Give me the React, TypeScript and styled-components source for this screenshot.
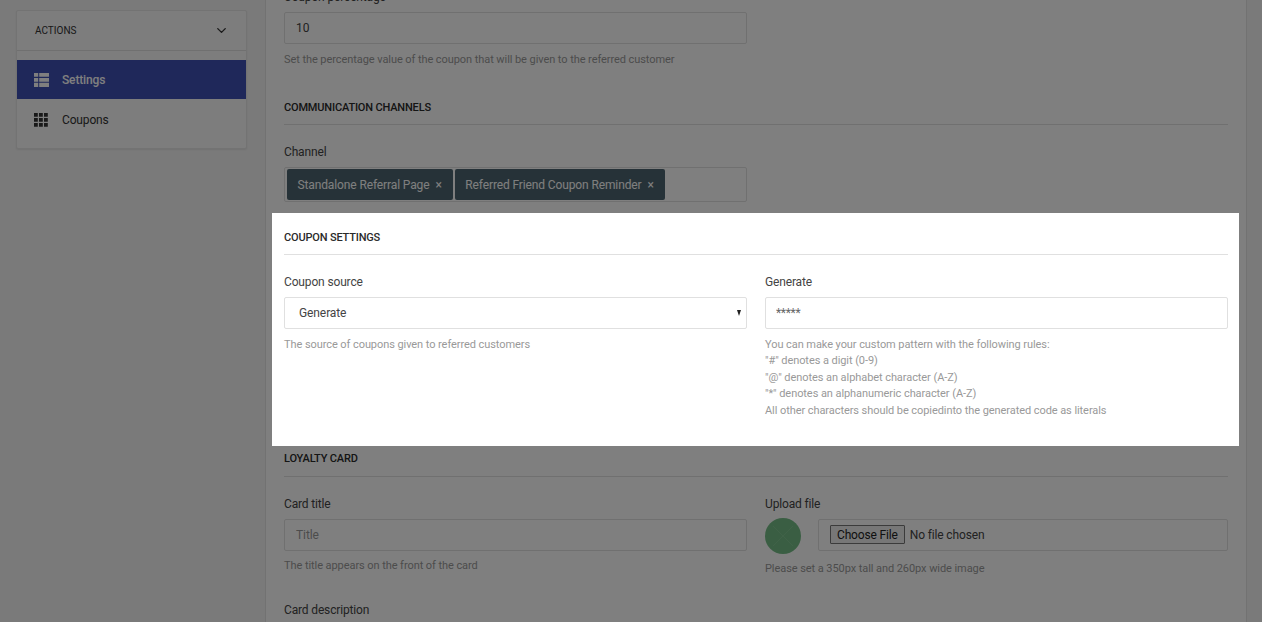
import React from "react";
import styled, { createGlobalStyle } from "styled-components";
import { ChevronDown } from "lucide-react";

const Global = createGlobalStyle`
  html, body { margin: 0; padding: 0; height: 622px; overflow: hidden; background: #f5f5f5; }
  body { font-family: Roboto, "Liberation Sans", sans-serif; color: #333; }
  * { box-sizing: border-box; }
`;

const Page = styled.div`
  display: flex;
  height: 622px;
  overflow: hidden;
  background: #f5f5f5;
`;
const Sidebar = styled.aside`
  flex: 0 0 266px;
  padding: 10px 18px 0 16px;
  border-right: 1px solid #e4e4e4;
`;
const SideCard = styled.nav`
  background: #fafafa;
  border: 1px solid #e6e6e6;
  border-radius: 2px;
  height: 139px;
  box-shadow: 0 1px 2px rgba(0,0,0,.08);
`;
const SideHead = styled.div`
  height: 40px;
  padding: 0 17px 1px 18px;
  display: flex;
  align-items: center;
  justify-content: space-between;
  font-size: 10px;
  color: #333;
  border-bottom: 1px solid #e0e0e0;
  margin-bottom: 9px;
`;
const SideItem = styled.div<{ $active?: boolean }>`
  height: ${p => (p.$active ? 39 : 41)}px;
  padding-left: 17px;
  display: flex;
  align-items: center;
  gap: 13px;
  font-size: 12px;
  letter-spacing: -.15px;
  font-weight: ${p => (p.$active ? 500 : 400)};
  color: ${p => (p.$active ? "#fff" : "#333")};
  background: ${p => (p.$active ? "#3f51b5" : "transparent")};
  svg { fill: currentColor; flex: none; }
`;
const Main = styled.main`
  flex: 0 0 981px;
  background: #fff;
  border-right: 1px solid #e4e4e4;
  margin-top: -10px;
  padding: 0 0 0 6px;
  height: 700px;
`;
const Section = styled.section`
  padding: 0 11px 0 12px;
  width: 967px;
`;
const Spotlight = styled.section`
  position: relative;
  z-index: 3;
  width: 967px;
  height: 233px;
  background: #fff;
  padding: 19px 11px 0 12px;
`;
const Title = styled.h3<{ $tall?: boolean }>`
  margin: 0;
  height: ${p => (p.$tall ? 24 : 23)}px;
  line-height: 12px;
  font-size: 11px;
  font-weight: 500;
  color: #2a2a2a;
  text-transform: uppercase;
  border-bottom: 1px solid #e0e0e0;
  letter-spacing: -.17px;
`;
const Row = styled.div`
  display: grid;
  grid-template-columns: 463px 463px;
  column-gap: 18px;
`;
const Field = styled.div<{ $narrow?: boolean }>`
  display: flex;
  flex-direction: column;
  min-width: 0;
  width: ${p => (p.$narrow ? "463px" : "auto")};
`;
const Label = styled.label`
  display: block;
  font-size: 12px;
  line-height: 14px;
  color: #444;
  letter-spacing: -.15px;
  margin-bottom: 8px;
`;
const TextInput = styled.input<{ $pattern?: boolean }>`
  width: 100%;
  height: 32px;
  border: 1px solid #e0e0e0;
  border-radius: 2px;
  padding: 0 ${p => (p.$pattern ? 10 : 11)}px;
  font: 12px Roboto, sans-serif;
  letter-spacing: ${p => (p.$pattern ? "-.3px" : "-.1px")};
  color: ${p => (p.$pattern ? "#666" : "#444")};
  outline: none;
  background: #fff;
  &::placeholder { color: #999; }
`;
const SelectWrap = styled.div`
  position: relative;
  &::after {
    content: "";
    position: absolute;
    right: 6px;
    top: 13px;
    border-left: 2.5px solid transparent;
    border-right: 2.5px solid transparent;
    border-top: 6px solid #222;
    pointer-events: none;
  }
`;
const Select = styled.select`
  display: block;
  width: 100%;
  height: 32px;
  border: 1px solid #e0e0e0;
  border-radius: 2px;
  padding: 0 14px;
  font: 12px Roboto, sans-serif;
  letter-spacing: -.1px;
  color: #444;
  background: #fff;
  outline: none;
  appearance: none;
`;
const Hint = styled.p<{ $tight?: boolean }>`
  margin: ${p => (p.$tight ? 7 : 8)}px 0 0;
  font-size: 11px;
  line-height: 16.5px;
  letter-spacing: -.07px;
  color: #999;
`;
const ChipBox = styled.div`
  height: 35px;
  border: 1px solid #e0e0e0;
  border-radius: 2px;
  padding: 1px 1px 1px 2px;
  display: flex;
  gap: 2px;
  width: 463px;
`;
const Chip = styled.span`
  height: 31px;
  padding: 1px 11px 0 10.5px;
  display: inline-flex;
  align-items: center;
  gap: 6px;
  background: #4d6570;
  color: #fff;
  font-size: 12px;
  letter-spacing: -.12px;
  border-radius: 2px;
  i { font-style: normal; font-size: 12px; }
`;
const UploadRow = styled.div`
  display: flex;
  align-items: flex-start;
  gap: 17px;
`;
const Avatar = styled.div`
  width: 36px;
  height: 36px;
  margin-top: -1px;
  border-radius: 50%;
  background: #74bd86;
  flex: none;
  svg { display: block; }
`;
const FileBox = styled.div`
  flex: 1;
  height: 32px;
  border: 1px solid #e0e0e0;
  border-radius: 2px;
  padding: 0 11px;
  display: flex;
  align-items: center;
  input {
    font: 12px Roboto, sans-serif;
    letter-spacing: -.15px;
    color: #444;
    width: 100%;
  }
  input::file-selector-button {
    font: 12px Roboto, sans-serif;
    letter-spacing: -.15px;
    height: 19px;
    padding: 0 6px;
    margin-right: 5px;
    color: #222;
    background: #efefef;
    border: 1px solid #767676;
    border-radius: 1px;
  }
`;
const Gap = styled.div<{ $h: number }>`
  height: ${p => p.$h}px;
`;
const Overlay = styled.div`
  position: fixed;
  inset: 0;
  background: rgba(0,0,0,.5);
  z-index: 2;
`;

const ListIcon = () => (
  <svg width="15" height="14" viewBox="0 0 15 14">
    <path d="M0 0h4.2v3.8H0zM5.2 0H15v3.8H5.2zM0 4.9h4.2v3.8H0zM5.2 4.9H15v3.8H5.2zM0 9.8h4.2V14H0zM5.2 9.8H15V14H5.2z" />
  </svg>
);
const GridIcon = () => (
  <svg width="15" height="14" viewBox="0 0 15 14">
    <path d="M0 0h3.8v3.8H0zM5 0h3.8v3.8H5zM10 0h3.8v3.8H10zM0 5h3.8v3.8H0zM5 5h3.8v3.8H5zM10 5h3.8v3.8H10zM0 10h3.8v3.8H0zM5 10h3.8v3.8H5zM10 10h3.8v3.8H10z" />
  </svg>
);

export default function App() {
  return (
    <>
      <Global />
      <Page>
        <Sidebar>
          <SideCard>
            <SideHead>
              ACTIONS
              <ChevronDown size={15} strokeWidth={2.2} />
            </SideHead>
            <SideItem $active><ListIcon />Settings</SideItem>
            <SideItem><GridIcon />Coupons</SideItem>
          </SideCard>
        </Sidebar>
        <Main>
          <Section>
            <Label>Coupon percentage</Label>
            <Field $narrow>
              <TextInput defaultValue="10" />
              <Hint>Set the percentage value of the coupon that will be given to the referred customer</Hint>
            </Field>
            <Gap $h={33} />
            <Title>Communication channels</Title>
            <Gap $h={20} />
            <Label>Channel</Label>
            <ChipBox>
              <Chip>Standalone Referral Page <i>×</i></Chip>
              <Chip>Referred Friend Coupon Reminder <i>×</i></Chip>
            </ChipBox>
          </Section>
          <Gap $h={11} />
          <Spotlight>
            <Title>Coupon settings</Title>
            <Gap $h={20} />
            <Row>
              <Field>
                <Label>Coupon source</Label>
                <SelectWrap>
                  <Select defaultValue="Generate"><option>Generate</option></Select>
                </SelectWrap>
                <Hint>The source of coupons given to referred customers</Hint>
              </Field>
              <Field>
                <Label>Generate</Label>
                <TextInput $pattern defaultValue="*****" />
                <Hint>
                  You can make your custom pattern with the following rules:<br />
                  "#" denotes a digit (0-9)<br />
                  "@" denotes an alphabet character (A-Z)<br />
                  "*" denotes an alphanumeric character (A-Z)<br />
                  All other characters should be copiedinto the generated code as literals
                </Hint>
              </Field>
            </Row>
          </Spotlight>
          <Section>
            <Gap $h={7} />
            <Title $tall>Loyalty card</Title>
            <Gap $h={20} />
            <Row>
              <Field>
                <Label>Card title</Label>
                <TextInput placeholder="Title" />
                <Hint $tight>The title appears on the front of the card</Hint>
              </Field>
              <Field>
                <Label>Upload file</Label>
                <UploadRow>
                  <Avatar>
                    <svg width="36" height="36" viewBox="0 0 36 36" stroke="#80c490" strokeWidth="1">
                      <path d="M8 8l20 20M28 8L8 28" />
                    </svg>
                  </Avatar>
                  <FileBox><input type="file" /></FileBox>
                </UploadRow>
                <Hint $tight>Please set a 350px tall and 260px wide image</Hint>
              </Field>
            </Row>
            <Gap $h={26} />
            <Label>Card description</Label>
          </Section>
        </Main>
      </Page>
      <Overlay />
    </>
  );
}
